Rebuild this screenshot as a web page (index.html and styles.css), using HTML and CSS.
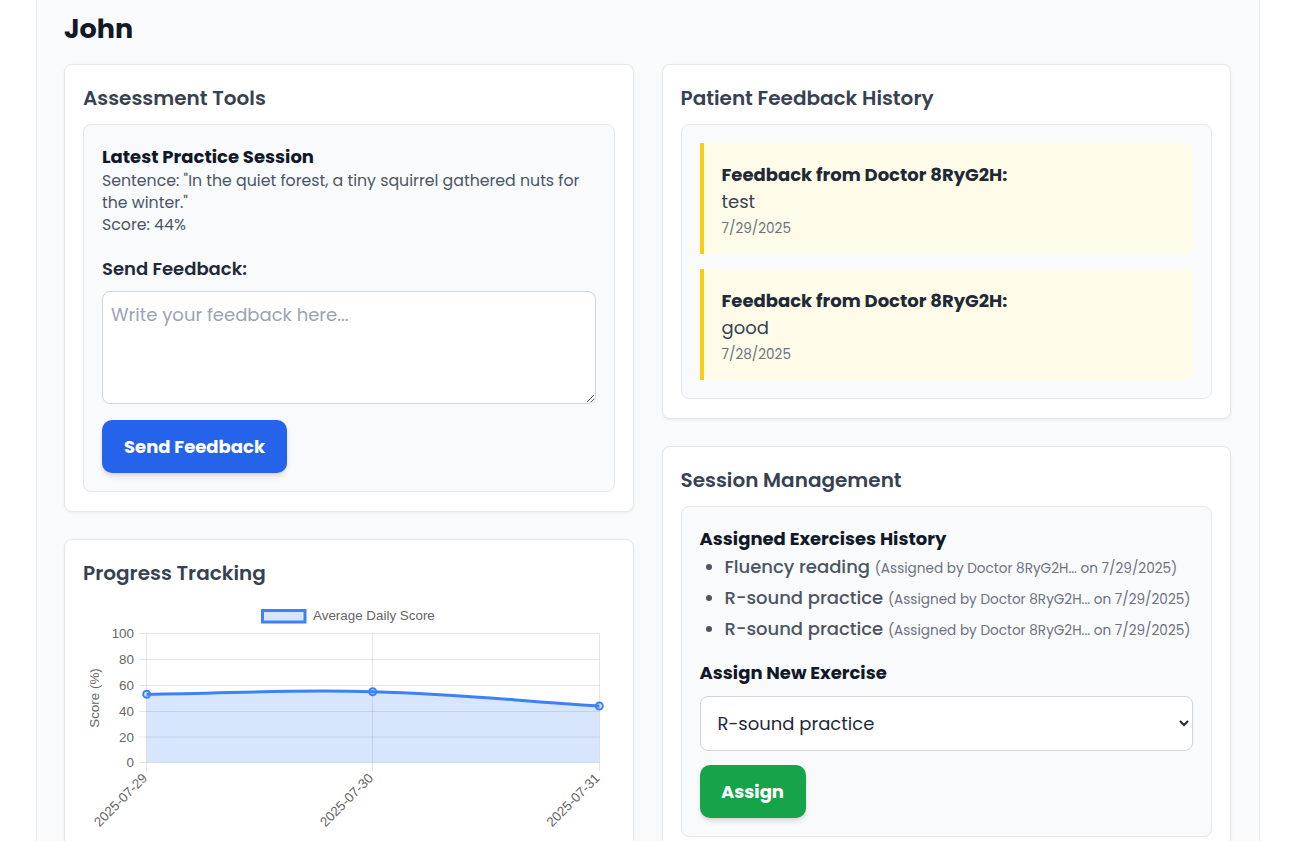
FILE: index.html
```html
<!DOCTYPE html>
<html lang="en">
<head>
  <meta charset="UTF-8">
  <meta name="viewport" content="width=device-width, initial-scale=1.0">
  <title>Patient - John</title>
  <link rel="stylesheet" href="styles.css">
</head>
<body>
<div class="page">
  <h1 class="patient_name">John</h1>

  <div class="columns">
    <div class="column">
      <!-- assessment -->
      <div class="card">
        <h2 class="card_title">Assessment Tools</h2>
        <div class="panel">
          <div class="panel_title session_title">Latest Practice Session</div>
          <p class="session_text">Sentence: "In the quiet forest, a tiny squirrel gathered nuts for the winter."</p>
          <p class="session_text">Score: 44%</p>
          <label class="field_label" for="feedback">Send Feedback:</label>
          <textarea id="feedback" class="feedback_input" placeholder="Write your feedback here..."></textarea>
          <button class="btn btn_blue">Send Feedback</button>
        </div>
      </div>

      <!-- progress chart -->
      <div class="card card_chart">
        <h2 class="card_title">Progress Tracking</h2>
        <svg class="chart" width="531" height="260" viewBox="83 599 531 260">
          <g class="grid">
            <line x1="139" y1="633.5" x2="599.5" y2="633.5"/>
            <line x1="139" y1="659.5" x2="599.5" y2="659.5"/>
            <line x1="139" y1="685.5" x2="599.5" y2="685.5"/>
            <line x1="139" y1="711.5" x2="599.5" y2="711.5"/>
            <line x1="139" y1="737" x2="599.5" y2="737"/>
            <line x1="139" y1="762.5" x2="599.5" y2="762.5"/>
            <line x1="146.5" y1="633.5" x2="146.5" y2="771"/>
            <line x1="372.5" y1="633.5" x2="372.5" y2="771"/>
            <line x1="599.5" y1="633.5" x2="599.5" y2="771"/>
          </g>
          <path class="area" d="M146.7,694.3 C237.1,693.3 282.4,689.4 372.7,691.7 C463.4,694 508.7,700.3 599.3,706 L599.3,762.5 L146.7,762.5 Z"/>
          <path class="line" d="M146.7,694.3 C237.1,693.3 282.4,689.4 372.7,691.7 C463.4,694 508.7,700.3 599.3,706"/>
          <circle class="dot" cx="146.7" cy="694.3" r="3.5"/>
          <circle class="dot" cx="372.7" cy="691.7" r="3.5"/>
          <circle class="dot" cx="599.3" cy="706" r="3.5"/>

          <rect class="legend_box" x="262.5" y="610.5" width="42.5" height="11.5"/>
          <text class="chart_text" x="313" y="620">Average Daily Score</text>

          <g class="chart_text y_ticks">
            <text x="134" y="638">100</text>
            <text x="134" y="664">80</text>
            <text x="134" y="690">60</text>
            <text x="134" y="715.5">40</text>
            <text x="134" y="741.5">20</text>
            <text x="134" y="767">0</text>
          </g>
          <text class="chart_text axis_title" transform="translate(99 698) rotate(-90)">Score (%)</text>

          <g class="chart_text x_ticks">
            <text transform="translate(148 779) rotate(-45)">2025-07-29</text>
            <text transform="translate(374 779) rotate(-45)">2025-07-30</text>
            <text transform="translate(600.5 779) rotate(-45)">2025-07-31</text>
          </g>
        </svg>
      </div>
    </div>

    <div class="column">
      <!-- feedback history -->
      <div class="card">
        <h2 class="card_title">Patient Feedback History</h2>
        <div class="panel panel_list">
          <div class="feedback_item">
            <div class="feedback_from">Feedback from Doctor 8RyG2H:</div>
            <div class="feedback_msg">test</div>
            <div class="feedback_date">7/29/2025</div>
          </div>
          <div class="feedback_item">
            <div class="feedback_from">Feedback from Doctor 8RyG2H:</div>
            <div class="feedback_msg">good</div>
            <div class="feedback_date">7/28/2025</div>
          </div>
        </div>
      </div>

      <!-- sessions -->
      <div class="card">
        <h2 class="card_title">Session Management</h2>
        <div class="panel">
          <div class="panel_title">Assigned Exercises History</div>
          <ul class="exercise_list">
            <li>Fluency reading <span class="exercise_meta">(Assigned by Doctor 8RyG2H... on 7/29/2025)</span></li>
            <li>R-sound practice <span class="exercise_meta">(Assigned by Doctor 8RyG2H... on 7/29/2025)</span></li>
            <li>R-sound practice <span class="exercise_meta">(Assigned by Doctor 8RyG2H... on 7/29/2025)</span></li>
          </ul>
          <div class="panel_title assign_title">Assign New Exercise</div>
          <select class="exercise_select">
            <option>R-sound practice</option>
            <option>Fluency reading</option>
          </select>
          <button class="btn btn_green">Assign</button>
        </div>
      </div>
    </div>
  </div>
</div>
</body>
</html>
```

FILE: styles.css
```css
body, html {
  margin: 0;
}
body {
  background: #fff;
  font-family: "Poppins", "Inter", sans-serif;
  color: #1f2937;
}
.page {
  box-sizing: border-box;
  width: 1224px;
  min-height: 100vh;
  margin-left: 36px;
  padding: 11px 28px 40px 27px;
  background: #f9fafb;
  border-left: 1px solid #e5e7eb;
  border-right: 1px solid #e5e7eb;
}
.patient_name {
  margin: 0 0 17px 0;
  font-size: 27px;
  line-height: 36px;
  font-weight: 700;
  color: #111827;
}
.columns {
  display: grid;
  grid-template-columns: 1fr 1fr;
  gap: 28px;
  align-items: start;
}
.column {
  display: flex;
  flex-direction: column;
  gap: 27px;
}
.card {
  background: #fff;
  border: 1px solid #e5e7eb;
  border-radius: 8px;
  box-shadow: 0 1px 3px rgba(0, 0, 0, 0.06);
  padding: 19px 18px;
}
.card_title {
  margin: 0 0 12px 0;
  font-size: 20px;
  line-height: 28px;
  font-weight: 600;
  color: #374151;
}
.panel {
  background: #f9fafb;
  border: 1px solid #e5e7eb;
  border-radius: 8px;
  padding: 18px;
}
.panel_title {
  font-size: 18px;
  line-height: 28px;
  font-weight: 700;
  color: #111827;
}
.session_title {
  line-height: 27px;
}
.session_text {
  margin: 0;
  font-size: 15.75px;
  line-height: 22px;
  color: #4b5563;
}
.field_label {
  display: block;
  margin: 19px 0 9px 0;
  font-size: 18px;
  line-height: 27px;
  font-weight: 600;
  color: #1f2937;
}
.feedback_input {
  display: block;
  box-sizing: border-box;
  width: 100%;
  height: 113px;
  padding: 9px 8px;
  border: 1px solid #d1d5db;
  border-radius: 8px;
  background: #fff;
  font-family: inherit;
  font-size: 18px;
  line-height: 27px;
  color: #1f2937;
}
.feedback_input::placeholder {
  color: #9ca3af;
}
.btn {
  display: block;
  height: 53px;
  margin-top: 16px;
  padding: 0;
  border: none;
  border-radius: 10px;
  font-family: inherit;
  font-size: 18px;
  font-weight: 700;
  color: #fff;
  box-shadow: 0 4px 6px -1px rgba(0, 0, 0, 0.12), 0 2px 4px -2px rgba(0, 0, 0, 0.1);
}
.btn_blue {
  background: #2563eb;
  width: 185px;
}
.btn_green {
  background: #16a34a;
  width: 106px;
  margin-top: 14px;
}
.panel_list {
  display: flex;
  flex-direction: column;
  gap: 15px;
}
.feedback_item {
  background: #fefce8;
  border-left: 4px solid #facc15;
  border-radius: 0 8px 8px 0;
  padding: 18px 18px 15px 18px;
}
.feedback_from {
  font-size: 18px;
  line-height: 27px;
  font-weight: 700;
  color: #1f2937;
}
.feedback_msg {
  font-size: 18px;
  line-height: 27px;
  color: #374151;
}
.feedback_date {
  margin-top: 4px;
  font-size: 13.6px;
  line-height: 20px;
  color: #6b7280;
}
.exercise_list {
  margin: 0;
  padding-left: 25px;
  color: #4b5563;
}
.exercise_list li {
  font-size: 18px;
  line-height: 27px;
  font-weight: 500;
  margin-bottom: 4px;
}
.exercise_meta {
  font-size: 13.6px;
  line-height: 1;
  font-weight: 400;
  color: #6b7280;
}
.assign_title {
  margin: 17px 0 9px 0;
}
.exercise_select {
  display: block;
  box-sizing: border-box;
  width: 100%;
  height: 55px;
  padding: 0 8px 0 13px;
  border: 1px solid #d1d5db;
  border-radius: 8px;
  background: #fff;
  font-family: inherit;
  font-size: 18px;
  color: #1f2937;
}
.card_chart {
  padding-bottom: 0;
}
.chart {
  display: block;
}
.grid line {
  stroke: rgba(0, 0, 0, 0.1);
  stroke-width: 1;
}
.area {
  fill: rgba(59, 130, 246, 0.2);
}
.line {
  fill: none;
  stroke: #3b82f6;
  stroke-width: 3;
}
.dot {
  fill: rgba(59, 130, 246, 0.2);
  stroke: #3b82f6;
  stroke-width: 2;
}
.legend_box {
  fill: rgba(59, 130, 246, 0.2);
  stroke: #3b82f6;
  stroke-width: 3;
}
.chart_text {
  font-family: "Liberation Sans", Arial, sans-serif;
  font-size: 13.4px;
  fill: #666;
}
.y_ticks text {
  text-anchor: end;
}
.axis_title {
  text-anchor: middle;
}
.x_ticks text {
  text-anchor: end;
}
```
